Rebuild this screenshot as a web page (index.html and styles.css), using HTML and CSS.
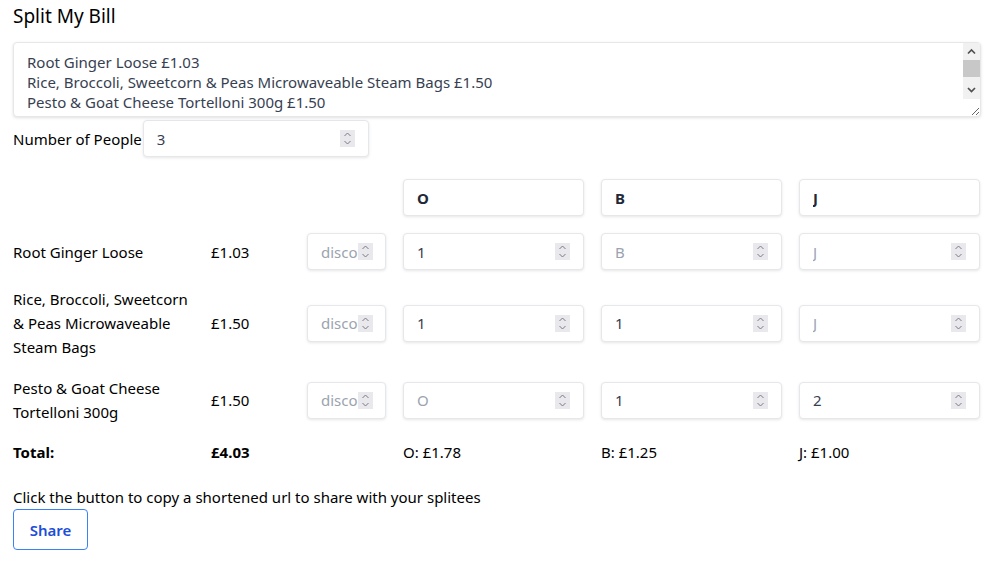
FILE: index.html
```html
<!DOCTYPE html>
<html lang="en">
<head>
<meta charset="utf-8">
<title>Split My Bill</title>
<link rel="stylesheet" href="styles.css">
</head>
<body>
<main class="app">
  <h1 class="title">Split My Bill</h1>
  <div class="items-wrap">
    <textarea class="items">Root Ginger Loose £1.03
Rice, Broccoli, Sweetcorn &amp; Peas Microwaveable Steam Bags £1.50
Pesto &amp; Goat Cheese Tortelloni 300g £1.50


</textarea>
    <svg class="scrollbar" width="17" height="56" viewBox="0 0 17 56"><rect width="17" height="56" fill="#f1f1f1"/><path d="M5 10.5 L8.5 7 L12 10.5" fill="none" stroke="#505050" stroke-width="1.7"/><rect x="0" y="17" width="17" height="17" fill="#c8c8c8"/><path d="M5 45 L8.5 48.5 L12 45" fill="none" stroke="#505050" stroke-width="1.7"/></svg>
  </div>
  <div class="people">
    <label class="people-label">Number of People</label>
    <div class="field people-field"><input class="field-input" value="3"><span class="spin"><svg width="15" height="17" viewBox="0 0 15 17"><rect width="15" height="17" fill="#e9e9ed"/><path d="M4.5 6 L7.5 3 L10.5 6" fill="none" stroke="#7a7a82" stroke-width="1"/><path d="M4.5 11 L7.5 14 L10.5 11" fill="none" stroke="#7a7a82" stroke-width="1"/></svg></span></div>
  </div>

  <div class="bill">
    <div></div><div></div><div></div>
    <div class="field head"><input class="field-input bold" value="O"></div>
    <div class="field head"><input class="field-input bold" value="B"></div>
    <div class="field head"><input class="field-input bold" value="J"></div>

    <div class="name">Root Ginger Loose</div>
    <div class="price">£1.03</div>
    <div class="field disc"><input class="field-input" placeholder="discount"><span class="spin"><svg width="15" height="17" viewBox="0 0 15 17"><rect width="15" height="17" fill="#e9e9ed"/><path d="M4.5 6 L7.5 3 L10.5 6" fill="none" stroke="#7a7a82" stroke-width="1"/><path d="M4.5 11 L7.5 14 L10.5 11" fill="none" stroke="#7a7a82" stroke-width="1"/></svg></span></div>
    <div class="field"><input class="field-input" value="1"><span class="spin"><svg width="15" height="17" viewBox="0 0 15 17"><rect width="15" height="17" fill="#e9e9ed"/><path d="M4.5 6 L7.5 3 L10.5 6" fill="none" stroke="#7a7a82" stroke-width="1"/><path d="M4.5 11 L7.5 14 L10.5 11" fill="none" stroke="#7a7a82" stroke-width="1"/></svg></span></div>
    <div class="field"><input class="field-input" placeholder="B"><span class="spin"><svg width="15" height="17" viewBox="0 0 15 17"><rect width="15" height="17" fill="#e9e9ed"/><path d="M4.5 6 L7.5 3 L10.5 6" fill="none" stroke="#7a7a82" stroke-width="1"/><path d="M4.5 11 L7.5 14 L10.5 11" fill="none" stroke="#7a7a82" stroke-width="1"/></svg></span></div>
    <div class="field"><input class="field-input" placeholder="J"><span class="spin"><svg width="15" height="17" viewBox="0 0 15 17"><rect width="15" height="17" fill="#e9e9ed"/><path d="M4.5 6 L7.5 3 L10.5 6" fill="none" stroke="#7a7a82" stroke-width="1"/><path d="M4.5 11 L7.5 14 L10.5 11" fill="none" stroke="#7a7a82" stroke-width="1"/></svg></span></div>

    <div class="name">Rice, Broccoli, Sweetcorn &amp; Peas Microwaveable Steam Bags</div>
    <div class="price">£1.50</div>
    <div class="field disc"><input class="field-input" placeholder="discount"><span class="spin"><svg width="15" height="17" viewBox="0 0 15 17"><rect width="15" height="17" fill="#e9e9ed"/><path d="M4.5 6 L7.5 3 L10.5 6" fill="none" stroke="#7a7a82" stroke-width="1"/><path d="M4.5 11 L7.5 14 L10.5 11" fill="none" stroke="#7a7a82" stroke-width="1"/></svg></span></div>
    <div class="field"><input class="field-input" value="1"><span class="spin"><svg width="15" height="17" viewBox="0 0 15 17"><rect width="15" height="17" fill="#e9e9ed"/><path d="M4.5 6 L7.5 3 L10.5 6" fill="none" stroke="#7a7a82" stroke-width="1"/><path d="M4.5 11 L7.5 14 L10.5 11" fill="none" stroke="#7a7a82" stroke-width="1"/></svg></span></div>
    <div class="field"><input class="field-input" value="1"><span class="spin"><svg width="15" height="17" viewBox="0 0 15 17"><rect width="15" height="17" fill="#e9e9ed"/><path d="M4.5 6 L7.5 3 L10.5 6" fill="none" stroke="#7a7a82" stroke-width="1"/><path d="M4.5 11 L7.5 14 L10.5 11" fill="none" stroke="#7a7a82" stroke-width="1"/></svg></span></div>
    <div class="field"><input class="field-input" placeholder="J"><span class="spin"><svg width="15" height="17" viewBox="0 0 15 17"><rect width="15" height="17" fill="#e9e9ed"/><path d="M4.5 6 L7.5 3 L10.5 6" fill="none" stroke="#7a7a82" stroke-width="1"/><path d="M4.5 11 L7.5 14 L10.5 11" fill="none" stroke="#7a7a82" stroke-width="1"/></svg></span></div>

    <div class="name">Pesto &amp; Goat Cheese Tortelloni 300g</div>
    <div class="price">£1.50</div>
    <div class="field disc"><input class="field-input" placeholder="discount"><span class="spin"><svg width="15" height="17" viewBox="0 0 15 17"><rect width="15" height="17" fill="#e9e9ed"/><path d="M4.5 6 L7.5 3 L10.5 6" fill="none" stroke="#7a7a82" stroke-width="1"/><path d="M4.5 11 L7.5 14 L10.5 11" fill="none" stroke="#7a7a82" stroke-width="1"/></svg></span></div>
    <div class="field"><input class="field-input" placeholder="O"><span class="spin"><svg width="15" height="17" viewBox="0 0 15 17"><rect width="15" height="17" fill="#e9e9ed"/><path d="M4.5 6 L7.5 3 L10.5 6" fill="none" stroke="#7a7a82" stroke-width="1"/><path d="M4.5 11 L7.5 14 L10.5 11" fill="none" stroke="#7a7a82" stroke-width="1"/></svg></span></div>
    <div class="field"><input class="field-input" value="1"><span class="spin"><svg width="15" height="17" viewBox="0 0 15 17"><rect width="15" height="17" fill="#e9e9ed"/><path d="M4.5 6 L7.5 3 L10.5 6" fill="none" stroke="#7a7a82" stroke-width="1"/><path d="M4.5 11 L7.5 14 L10.5 11" fill="none" stroke="#7a7a82" stroke-width="1"/></svg></span></div>
    <div class="field"><input class="field-input" value="2"><span class="spin"><svg width="15" height="17" viewBox="0 0 15 17"><rect width="15" height="17" fill="#e9e9ed"/><path d="M4.5 6 L7.5 3 L10.5 6" fill="none" stroke="#7a7a82" stroke-width="1"/><path d="M4.5 11 L7.5 14 L10.5 11" fill="none" stroke="#7a7a82" stroke-width="1"/></svg></span></div>

    <div class="total bold">Total:</div>
    <div class="total bold">£4.03</div>
    <div></div>
    <div class="total">O: £1.78</div>
    <div class="total">B: £1.25</div>
    <div class="total">J: £1.00</div>
  </div>

  <p class="hint">Click the button to copy a shortened url to share with your splitees</p>
  <button class="share">Share</button>
</main>
</body>
</html>
```

FILE: styles.css
```css
* { box-sizing: border-box; }

body {
  margin: 0;
  background: #ffffff;
  color: #000000;
  font-family: "Noto Sans", "Open Sans", sans-serif;
  font-size: 15px;
}

.app {
  padding: 2px 10px 0 13px;
  width: 991px;
}

.title {
  margin: 0;
  font-size: 19px;
  line-height: 28px;
  font-weight: 400;
}

.items-wrap {
  position: relative;
  width: 968px;
  margin-top: 12px;
}

.items {
  display: block;
  width: 968px;
  height: 75px;
  padding: 9px 13px;
  border: 1px solid #e5e7eb;
  border-radius: 4px;
  box-shadow: 0 1px 3px rgba(0,0,0,0.12);
  font-family: inherit;
  font-size: 15px;
  line-height: 20px;
  color: #374151;
  overflow: hidden;
  resize: vertical;
}

.scrollbar {
  position: absolute;
  top: 1px;
  right: 1px;
  display: block;
}

.people {
  display: flex;
  align-items: center;
  margin-top: 3px;
}

.people-label {
  line-height: 24px;
}

.field {
  display: flex;
  align-items: center;
  height: 37px;
  border: 1px solid #e5e7eb;
  border-radius: 4px;
  background: #fff;
  box-shadow: 0 1px 3px rgba(0,0,0,0.1);
  padding: 0 13px 0 13px;
  min-width: 0;
}

.people-field {
  width: 226px;
  margin-left: 1px;
}

.field-input {
  flex: 1;
  min-width: 0;
  border: 0;
  outline: 0;
  padding: 0;
  background: transparent;
  font-family: inherit;
  font-size: 15px;
  color: #374151;
}

.field-input::placeholder {
  color: #9ca3af;
}

.field-input.bold {
  font-weight: 700;
  color: #1f2937;
}

.spin {
  display: flex;
  flex: none;
  width: 15px;
  height: 17px;
}

.spin svg { display: block; }

.bill {
  display: grid;
  grid-template-columns: 181px 79px 79px 181px 181px 181px;
  column-gap: 17px;
  row-gap: 17px;
  align-items: center;
  margin-top: 22px;
}

.disc {
  padding-right: 12px;
}

.name, .price, .total {
  line-height: 24px;
}

.bold { font-weight: 700; }

.total { margin-top: -1px; }

.hint {
  margin: 21px 0 0 0;
  line-height: 24px;
}

.share {
  display: block;
  margin-top: 0;
  width: 75px;
  height: 41px;
  border: 1px solid #3b82f6;
  border-radius: 4px;
  background: #fff;
  color: #1d4ed8;
  font-family: inherit;
  font-size: 15px;
  font-weight: 600;
  padding: 0;
}
```
